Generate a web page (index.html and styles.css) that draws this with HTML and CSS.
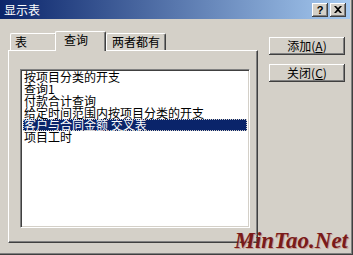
FILE: index.html
```html
<!DOCTYPE html>
<html lang="zh-CN">
<head>
<meta charset="utf-8">
<title>显示表</title>
<link rel="stylesheet" href="styles.css">
</head>
<body>
<div class="window">
  <div class="titlebar">
    <span class="title">显示表</span>
    <div class="tbtns">
      <span class="tbtn help">?</span>
      <span class="tbtn close"><svg width="8" height="7" viewBox="0 0 8 7"><path d="M0 0h2l2 2 2-2h2L5 3.5 8 7H6L4 5 2 7H0l3-3.5z" fill="#000"/></svg></span>
    </div>
  </div>
  <div class="content">
    <div class="tabarea">
      <div class="tabs">
        <div class="tab first">表</div>
        <div class="tab active">查询</div>
        <div class="tab last">两者都有</div>
      </div>
      <div class="panel">
        <div class="listbox">
          <div class="item">按项目分类的开支</div>
          <div class="item">查询1</div>
          <div class="item">付款合计查询</div>
          <div class="item">给定时间范围内按项目分类的开支</div>
          <div class="item selected">客户与合同金额 交叉表</div>
          <div class="item">项目工时</div>
        </div>
      </div>
    </div>
    <div class="buttons">
      <div class="btn">添加(<u>A</u>)</div>
      <div class="btn">关闭(<u>C</u>)</div>
    </div>
  </div>
  <div class="watermark">MinTao.Net</div>
</div>
</body>
</html>
```
FILE: styles.css
```css
* { box-sizing: border-box; }
html, body { margin: 0; padding: 0; }
body {
  width: 353px;
  height: 255px;
  overflow: hidden;
  background: #d4d0c8;
  font-family: "Noto Sans CJK SC", "Liberation Sans", sans-serif;
  font-size: 12px;
  color: #000;
}
.window {
  position: relative;
  width: 353px;
  height: 255px;
  background: #d4d0c8;
  padding: 0 3px 3px 0;
  box-shadow: inset -1px -1px 0 #404040, inset -2px -2px 0 #808080;
}
.titlebar {
  height: 19px;
  display: flex;
  align-items: center;
  justify-content: space-between;
  padding: 0 4px 0 4px;
  background: linear-gradient(to right, #0a246a, #a6caf0);
}
.title {
  color: #fff;
  font-size: 12px;
  line-height: 19px;
}
.tbtns { display: flex; gap: 2px; }
.tbtn {
  width: 16px;
  height: 14px;
  display: flex;
  align-items: center;
  justify-content: center;
  background: #d4d0c8;
  box-shadow: inset -1px -1px 0 #404040, inset 1px 1px 0 #fff, inset -2px -2px 0 #808080;
  font-family: "Liberation Sans", sans-serif;
  font-weight: bold;
  font-size: 11px;
  line-height: 14px;
}
.content {
  display: flex;
  padding: 12px 0 0 8px;
}
.tabarea { width: 250px; flex-shrink: 0; }
.tabs {
  display: flex;
  height: 19px;
  align-items: flex-end;
  padding-left: 2px;
  position: relative;
  z-index: 1;
}
.tab {
  flex-shrink: 0;
  white-space: nowrap;
  height: 17px;
  background: #d4d0c8;
  border-top: 1px solid #fff;
  border-left: 1px solid #fff;
  border-right: 1px solid #404040;
  border-radius: 2px 2px 0 0;
  box-shadow: inset -1px 0 0 #808080;
  font-size: 12px;
  line-height: 15px;
}
.tab.first { width: 47px; padding-left: 4px; }
.tab.active {
  width: 51px;
  height: 20px;
  margin-bottom: -1px;
  margin-left: -2px;
  padding-left: 8px;
  line-height: 16px;
}
.tab.last { width: 60px; padding-left: 5px; }
.panel {
  height: 193px;
  background: #d4d0c8;
  border-top: 1px solid #fff;
  border-left: 1px solid #fff;
  border-right: 1px solid #404040;
  border-bottom: 1px solid #404040;
  box-shadow: inset -1px -1px 0 #808080;
  padding: 18px 0 0 11px;
}
.listbox {
  width: 230px;
  height: 159px;
  background: #fff;
  border-top: 1px solid #808080;
  border-left: 1px solid #808080;
  border-right: 1px solid #fff;
  border-bottom: 1px solid #fff;
  box-shadow: inset 1px 1px 0 #404040, inset -1px -1px 0 #d4d0c8;
  padding: 1px 2px 0 2px;
}
.item {
  height: 12px;
  line-height: 12px;
  font-size: 12px;
  padding-left: 1px;
  white-space: nowrap;
}
.item.selected {
  background: #0a246a;
  color: #fff;
  outline: 1px dotted #d4d0c8;
  outline-offset: -1px;
}
.buttons {
  display: flex;
  flex-direction: column;
  gap: 9px;
  padding: 6px 0 0 11px;
}
.btn {
  width: 76px;
  height: 18px;
  display: flex;
  align-items: center;
  justify-content: center;
  background: #d4d0c8;
  box-shadow: inset -1px -1px 0 #404040, inset 1px 1px 0 #fff, inset -2px -2px 0 #808080;
  font-size: 12px;
  line-height: 14px;
}
.btn u { text-underline-offset: 1px; }
.watermark {
  position: absolute;
  right: 5px;
  bottom: 3px;
  font-family: "Liberation Serif", serif;
  font-style: italic;
  font-weight: bold;
  font-size: 23px;
  line-height: 23px;
  color: #7a1a1a;
  text-shadow: 1px 1px 0 #c8a090;
}
```
